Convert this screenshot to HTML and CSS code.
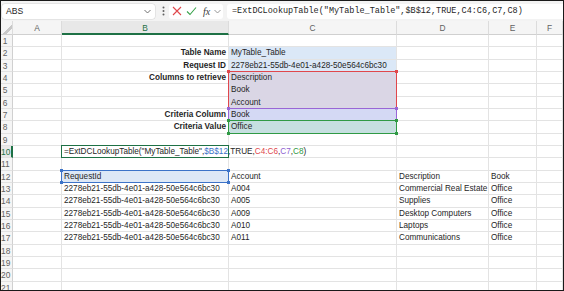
FILE: index.html
```html
<!DOCTYPE html>
<html lang="en">
<head>
    <meta charset="UTF-8">
    <title>ExtDCLookupTable</title>
    <link rel="stylesheet" href="styles.css">
</head>
<body>
<div class="app">
    <div class="fbar">
        <div class="namebox">
            <span>ABS</span>
            <svg class="chev" width="7" height="5" viewBox="0 0 7 5"><path d="M0.5 1 L3.5 4 L6.5 1" fill="none" stroke="#616161" stroke-width="0.9"/></svg>
        </div>
        <svg class="dots" width="3" height="10" viewBox="0 0 3 10"><circle cx="1.5" cy="1.5" r="1" fill="#616161"/><circle cx="1.5" cy="5" r="1" fill="#616161"/><circle cx="1.5" cy="8.5" r="1" fill="#616161"/></svg>
        <div class="fxgroup">
            <svg width="10" height="10" viewBox="0 0 10 10"><path d="M1 1 L9 9 M9 1 L1 9" stroke="#e0474c" stroke-width="1.1" fill="none"/></svg>
            <svg width="11" height="10" viewBox="0 0 11 10"><path d="M1 5.5 L4 8.5 L10 1.5" stroke="#37a24a" stroke-width="1.1" fill="none"/></svg>
            <span class="fx">fx</span>
            <svg class="chev" width="7" height="5" viewBox="0 0 7 5"><path d="M0.5 1 L3.5 4 L6.5 1" fill="none" stroke="#8a8a8a" stroke-width="0.9"/></svg>
        </div>
        <div class="formula">=ExtDCLookupTable("MyTable_Table",$B$12,TRUE,C4:C6,C7,C8)</div>
    </div>

    <div class="sheet">
        <div class="corner"></div><div class="ch">A</div><div class="ch sel">B</div><div class="ch">C</div><div class="ch">D</div><div class="ch">E</div><div class="ch">F</div>

        <div class="rh">1</div><div class="c"></div><div class="c"></div><div class="c"></div><div class="c"></div><div class="c"></div><div class="c"></div>
        <div class="rh">2</div><div class="c"></div><div class="c lbl">Table Name</div><div class="c blue">MyTable_Table</div><div class="c"></div><div class="c"></div><div class="c"></div>
        <div class="rh">3</div><div class="c"></div><div class="c lbl">Request ID</div><div class="c blue">2278eb21-55db-4e01-a428-50e564c6bc30</div><div class="c"></div><div class="c"></div><div class="c"></div>
        <div class="rh">4</div><div class="c"></div><div class="c lbl">Columns to retrieve</div><div class="c pur">Description</div><div class="c"></div><div class="c"></div><div class="c"></div>
        <div class="rh">5</div><div class="c"></div><div class="c"></div><div class="c pur">Book</div><div class="c"></div><div class="c"></div><div class="c"></div>
        <div class="rh">6</div><div class="c"></div><div class="c"></div><div class="c pur">Account</div><div class="c"></div><div class="c"></div><div class="c"></div>
        <div class="rh">7</div><div class="c"></div><div class="c lbl">Criteria Column</div><div class="c lav">Book</div><div class="c"></div><div class="c"></div><div class="c"></div>
        <div class="rh">8</div><div class="c"></div><div class="c lbl">Criteria Value</div><div class="c teal">Office</div><div class="c"></div><div class="c"></div><div class="c"></div>
        <div class="rh">9</div><div class="c"></div><div class="c"></div><div class="c"></div><div class="c"></div><div class="c"></div><div class="c"></div>
        <div class="rh sel">10</div><div class="c"></div><div class="c edit">=ExtDCLookupTable("MyTable_Table",<span class="ref-b">$B$12</span>,TRUE,<span class="ref-r">C4:C6</span>,<span class="ref-p">C7</span>,<span class="ref-g">C8</span>)</div><div class="c"></div><div class="c"></div><div class="c"></div><div class="c"></div>
        <div class="rh">11</div><div class="c"></div><div class="c"></div><div class="c"></div><div class="c"></div><div class="c"></div><div class="c"></div>
        <div class="rh">12</div><div class="c"></div><div class="c head">RequestId</div><div class="c">Account</div><div class="c">Description</div><div class="c">Book</div><div class="c"></div>
        <div class="rh">13</div><div class="c"></div><div class="c">2278eb21-55db-4e01-a428-50e564c6bc30</div><div class="c">A004</div><div class="c">Commercial Real Estate</div><div class="c">Office</div><div class="c"></div>
        <div class="rh">14</div><div class="c"></div><div class="c">2278eb21-55db-4e01-a428-50e564c6bc30</div><div class="c">A005</div><div class="c">Supplies</div><div class="c">Office</div><div class="c"></div>
        <div class="rh">15</div><div class="c"></div><div class="c">2278eb21-55db-4e01-a428-50e564c6bc30</div><div class="c">A009</div><div class="c">Desktop Computers</div><div class="c">Office</div><div class="c"></div>
        <div class="rh">16</div><div class="c"></div><div class="c">2278eb21-55db-4e01-a428-50e564c6bc30</div><div class="c">A010</div><div class="c">Laptops</div><div class="c">Office</div><div class="c"></div>
        <div class="rh">17</div><div class="c"></div><div class="c">2278eb21-55db-4e01-a428-50e564c6bc30</div><div class="c">A011</div><div class="c">Communications</div><div class="c">Office</div><div class="c"></div>
        <div class="rh">18</div><div class="c"></div><div class="c"></div><div class="c"></div><div class="c"></div><div class="c"></div><div class="c"></div>
        <div class="rh">19</div><div class="c"></div><div class="c"></div><div class="c"></div><div class="c"></div><div class="c"></div><div class="c"></div>
        <div class="rh">20</div><div class="c"></div><div class="c"></div><div class="c"></div><div class="c"></div><div class="c"></div><div class="c"></div>
        <div class="rh">21</div><div class="c"></div><div class="c"></div><div class="c"></div><div class="c"></div><div class="c"></div><div class="c"></div>

        <!-- reference highlights drawn over the cells -->
        <div class="hl hl-red"></div>
        <div class="hl hl-purple"></div>
        <div class="hl hl-green"></div>
        <div class="hl hl-blue"></div>
        <div class="active"></div>
    </div>
</div>
</body>
</html>
```

FILE: styles.css
```css
body {
    margin: 0;
    background: #ffffff;
}

.app {
    width: 564px;
    height: 291px;
    box-sizing: border-box;
    border: 1px solid #1a1a1a;
    overflow: hidden;
    font-family: "Liberation Sans", Arial, sans-serif;
    color: #262626;
}

/* formula bar */
.fbar {
    height: 20px;
    display: flex;
    align-items: center;
    background: #f3f3f3;
    padding: 0 0 0 1px;
    box-sizing: border-box;
}

.namebox {
    width: 153px;
    height: 15px;
    box-sizing: border-box;
    background: #ffffff;
    border-radius: 3px;
    box-shadow: 0 0 0 0.5px #d6d6d6;
    display: flex;
    align-items: center;
    justify-content: space-between;
    padding: 0 4px 0 4px;
    font-size: 8.6px;
    color: #242424;
}

.dots {
    margin: 0 4px 0 7px;
}

.fxgroup {
    width: 54px;
    height: 15px;
    box-sizing: border-box;
    background: #ffffff;
    border-radius: 3px;
    display: flex;
    align-items: center;
    gap: 4px;
    padding-left: 3px;
}

.fx {
    font-family: "Liberation Serif", serif;
    font-style: italic;
    font-size: 10px;
    color: #3a3a3a;
    margin-left: 2px;
}

.formula {
    flex: 1;
    height: 15px;
    margin-left: 4px;
    background: #ffffff;
    border-radius: 3px 0 0 3px;
    font-family: "Liberation Mono", monospace;
    font-size: 8.5px;
    line-height: 15px;
    padding-left: 5px;
    white-space: nowrap;
    color: #1f1f1f;
}

/* grid */
.sheet {
    position: relative;
    display: grid;
    grid-template-columns: 12px 49px 167px 168px 92px 48px minmax(0, 1fr);
    grid-template-rows: 14px;
    grid-auto-rows: 12.33px;
    font-size: 8.2px;
}

.corner,
.ch {
    background: #f5f5f5;
    border-right: 1px solid #dcdcdc;
    border-bottom: 1px solid #d0d0d0;
    box-sizing: border-box;
}

.corner {
    background: linear-gradient(135deg, transparent 60%, #c8c8c8 60%, #c8c8c8 78%, transparent 78%) #f5f5f5;
}

.ch {
    text-align: center;
    font-size: 8.4px;
    line-height: 14px;
    color: #616161;
}

.ch.sel {
    background: #e8e8e8;
    border-bottom: 2px solid #1e7145;
    color: #1e7145;
}

.rh {
    background: #f5f5f5;
    border-right: 1px solid #d0d0d0;
    border-bottom: 1px solid #e1e1e1;
    box-sizing: border-box;
    text-align: center;
    padding-right: 3px;
    font-size: 8.4px;
    line-height: 12px;
    color: #616161;
}

.rh.sel {
    background: #e8e8e8;
    border-right: 2px solid #1e7145;
    color: #1e7145;
}

.c {
    border-right: 1px solid #e3e3e3;
    border-bottom: 1px solid #e3e3e3;
    box-sizing: border-box;
    padding: 0 2px;
    line-height: 12px;
    white-space: nowrap;
}

.lbl {
    font-weight: bold;
    text-align: right;
    color: #1f1f1f;
}

.blue {
    background: #dbe8f7;
}

.pur {
    background: #dad6e5;
    border-bottom-color: #dad6e5;
}

.lav {
    background: #d4d9f4;
}

.teal {
    background: #c6dfe0;
}

.head {
    background: #dde8f6;
}

.ref-b { color: #3c73c8; }
.ref-r { color: #e0474c; }
.ref-p { color: #8e5fd0; }
.ref-g { color: #2f9a44; }

/* range highlights */
.hl {
    position: absolute;
    top: -1px;
    left: -1px;
    right: 0;
    bottom: 0;
    border: 1px solid currentColor;
}

.hl::before,
.hl::after {
    content: "";
    position: absolute;
    left: -2px;
    right: -2px;
    height: 3px;
    background:
        linear-gradient(currentColor, currentColor) left / 3px 3px no-repeat,
        linear-gradient(currentColor, currentColor) right / 3px 3px no-repeat;
}

.hl::before { top: -2px; }
.hl::after { bottom: -2px; }

.hl-red {
    grid-column: 4 / 5;
    grid-row: 5 / 8;
    color: #e0474c;
}

.hl-purple {
    grid-column: 4 / 5;
    grid-row: 8 / 9;
    color: #9966d6;
}

.hl-green {
    grid-column: 4 / 5;
    grid-row: 9 / 10;
    color: #2f9a44;
}

.hl-blue {
    grid-column: 3 / 4;
    grid-row: 13 / 14;
    color: #3c73c8;
}

.active {
    position: absolute;
    grid-column: 3 / 4;
    grid-row: 11 / 12;
    top: -1px;
    left: -1px;
    right: 0;
    bottom: 0;
    border: 1px solid #1e7145;
}
```
